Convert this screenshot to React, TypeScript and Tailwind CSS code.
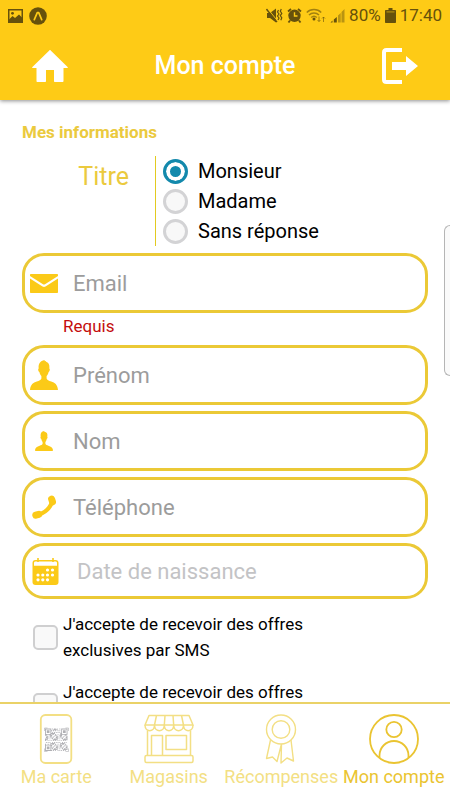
import React, { useState } from "react";

type IconProps = { className?: string };

/* Status bar icons */

const PictureIcon = () => (
  <svg width="15" height="14" viewBox="0 0 15 14" fill="none">
    <rect x="0.75" y="0.75" width="13.5" height="12.5" stroke="currentColor" strokeWidth="1.5" />
    <path d="M1 10.5 4.5 7l2.5 2 4-3.500L14 8.500V13H1z" fill="currentColor" />
    <circle cx="4.500" cy="4.300" r="1.400" fill="currentColor" />
  </svg>
);

const ExpoIcon = () => (
  <svg width="18" height="18" viewBox="0 0 18 18" fill="none">
    <circle cx="9" cy="9" r="8.800" fill="currentColor" />
    <path d="M5.300 12.600 8.300 5.600h1.400l3 7" stroke="#fecb16" strokeWidth="1.700" strokeLinejoin="round" strokeLinecap="round" />
  </svg>
);

const MuteIcon = () => (
  <svg width="17" height="15" viewBox="0 0 17 15" fill="none" stroke="currentColor">
    <path d="M1 5h3l6-4.500v14L4 10H1z" fill="currentColor" stroke="none" />
    <path d="M0.500 1 11 14" strokeWidth="1.600" />
    <path d="M1.600 0.500 12 13.500" stroke="#fecb16" strokeWidth="0.900" />
    <path d="m12.500 2-1 2 1.500 2-1.500 2 1.500 2-1 2M15.300 1l-1 2.200 1.500 2.200-1.500 2.200 1.500 2.200-1 2.500" strokeWidth="1.200" />
  </svg>
);

const AlarmIcon = () => (
  <svg width="15" height="15" viewBox="0 0 15 15" fill="none">
    <circle cx="7.500" cy="7.800" r="6.200" fill="currentColor" />
    <path d="M1 3.500 4 1M14 3.500 11 1M3 12.500l-1.500 2M12 12.500l1.500 2" stroke="currentColor" strokeWidth="1.800" />
    <path d="M7.500 4.300V8h3" stroke="#fecb16" strokeWidth="1.400" />
  </svg>
);

const WifiIcon = () => (
  <svg width="20" height="15" viewBox="0 0 20 15" fill="none" stroke="currentColor">
    <g strokeWidth="1.500" opacity="0.600">
      <path d="M0.800 4.500C4.500 0.500 11.500 0.500 15.200 4.500" />
      <path d="M3 7c2.800-2.800 7.200-2.800 10 0" />
      <path d="M5.200 9.500c1.600-1.500 4-1.500 5.600 0" />
    </g>
    <circle cx="8" cy="11" r="1.500" fill="currentColor" stroke="none" />
    <path d="M13 8.500v5M11.500 12l1.500 1.500 1.500-1.500M17.500 14V9M16 10.500 17.500 9l1.500 1.500" strokeWidth="1" opacity="0.600" />
  </svg>
);

const SignalIcon = () => (
  <svg width="15" height="14" viewBox="0 0 15 14" fill="currentColor">
    <path d="M0.500 13.500 2.500 11.500v2zM3.800 10.500 6.800 8v5.500h-3z" />
    <path d="M8 6.500 10.700 4v9.500H8zM11.500 3 14.500 0v13.500h-3z" opacity="0.450" />
  </svg>
);

const BatteryIcon = () => (
  <svg width="11" height="15" viewBox="0 0 11 15" fill="currentColor">
    <path d="M3.500 0h4v2h2.500c.6 0 1 .4 1 1v11c0 .6-.4 1-1 1H1c-.6 0-1-.4-1-1V3c0-.6.4-1 1-1h2.500z" />
    <path d="M1.500 3.300h8v1.200h-8z" fill="#fecb16" opacity="0.500" />
  </svg>
);

/* Header icons */

const HomeIcon = () => (
  <svg width="36" height="32" viewBox="0 0 36 32" fill="currentColor">
    <path d="M17.300 0.400c.4-.4 1-.4 1.400 0L35.600 17c.4.400.2 1-.4 1H31.500v13c0 .600-.4 1-1 1H23c-.6 0-1-.4-1-1V20h-8v11c0 .600-.4 1-1 1H5.500c-.6 0-1-.4-1-1V18H.8c-.6 0-.8-.6-.4-1z" />
  </svg>
);

const LogoutIcon = () => (
  <svg width="36" height="36" viewBox="0 0 36 36">
    <path d="M20 2H4.500C3 2 2 3 2 4.500v27C2 33 3 34 4.500 34H20" fill="none" stroke="currentColor" strokeWidth="4" />
    <path d="M10 14h14V8l12 10-12 10v-6H10z" fill="currentColor" />
  </svg>
);

/* Form icons */

const MailIcon = () => (
  <svg width="28" height="19" viewBox="0 0 28 19" fill="currentColor">
    <path d="M0.800 0h26.400c.5 0 .8.300.8.800V2L15 10.300c-.6.400-1.400.400-2 0L0 2V.800C0 .300.300 0 .8 0z" />
    <path d="M0 4.600 12.500 12.500c.9.600 2.100.600 3 0L28 4.600V18c0 .600-.4 1-1 1H1c-.6 0-1-.4-1-1z" />
  </svg>
);

const PersonIcon = ({ className }: IconProps) => (
  <svg className={className} viewBox="0 0 28 30" fill="currentColor">
    <path d="M14.500 0l.3 1.200 1.500-.3-.4.900c2.600.6 3.700 2.700 3.500 5.700l-.1 1c.9.200.5 3.200-.7 3.500-.3 1.800-1 3.100-2 4v2.500c.5 1.600 2.200 2.200 4.600 3.100 3.600 1.300 6.300 2.800 6.800 8.400H0c.5-5.600 3.200-7.100 6.800-8.400 2.400-.9 4.100-1.500 4.600-3.100V16c-1-.9-1.700-2.200-2-4-1.200-.3-1.600-3.300-.7-3.500l-.1-1C8.400 4 10.200.800 14.500 0z" />
  </svg>
);

const SmallPersonIcon = () => (
  <svg width="18" height="20" viewBox="0 0 18 20" fill="currentColor">
    <path d="M9.200 0l.2.800c2.300.3 3.200 1.900 3 4l-.1 1c.5.400.2 2-.6 2.300-.2 1.300-.7 2.200-1.300 2.800v1.800c.4 1.100 1.500 1.400 3 2 2.400.8 4.300 1.700 4.600 4.300 0 .600-.4 1-1 1H1c-.6 0-1-.4-1-1 .3-2.600 2.200-3.500 4.600-4.300 1.500-.6 2.600-.9 3-2v-1.800C7 10.300 6.500 9.400 6.300 8.100c-.8-.3-1.100-1.900-.6-2.300l-.1-1C5.400 2.200 6.600.500 9.200 0z" />
  </svg>
);

const PhoneIcon = () => (
  <svg width="24" height="24" viewBox="0 0 24 24" fill="none" stroke="currentColor" strokeLinecap="round">
    <path d="M20 5.500C19.500 12 12.500 19 5 19.800" strokeWidth="4" />
    <path d="M19.600 4 20.500 6.800" strokeWidth="7" />
    <path d="M3.800 20.200 6.800 19.300" strokeWidth="7" />
  </svg>
);

const CALENDAR_DOTS = [
  [15.5, 12], [20.500, 12],
  [6, 17], [10.800, 17], [15.500, 17], [20.500, 17],
  [6, 21.800], [10.800, 21.800], [15.500, 21.800],
];

const CalendarIcon = () => (
  <svg width="27" height="27" viewBox="0 0 27 27">
    <rect x="0.500" y="2" width="26" height="25" rx="3" fill="currentColor" />
    <path d="M2 7.800V5c0-1 .6-1.500 1.500-1.500h20c.9 0 1.500.5 1.500 1.500v2.800z" fill="#fff" />
    <path d="M6 0v4M21 0v4" stroke="currentColor" strokeWidth="1.600" />
    {CALENDAR_DOTS.map(([x, y]) => (
      <circle key={`${x}-${y}`} cx={x} cy={y} r="1.600" fill="#fff" />
    ))}
  </svg>
);

/* Tab bar icons */

const QR_SIZE = 25;

// null outside the three corner squares, otherwise whether the module is filled
const finder = (x: number, y: number) => {
  const fx = x > 17 ? x - 18 : x;
  const fy = y > 17 ? y - 18 : y;
  if (fx > 6 || fy > 6 || (x > 17 && y > 17)) return null;
  const ring = Math.max(Math.abs(fx - 3), Math.abs(fy - 3));
  return ring !== 2;
};

const QR_PATH = Array.from({ length: QR_SIZE * QR_SIZE }, (_, i) => {
  const x = i % QR_SIZE;
  const y = Math.floor(i / QR_SIZE);
  const on = finder(x, y) ?? (x * 7 + y * 13 + x * y * 5) % 11 < 5;
  return on ? `M${x} ${y}h1v1h-1z` : "";
}).join("");

const CardIcon = () => (
  <svg width="50" height="50" viewBox="0 0 50 50" fill="none">
    <rect x="9.800" y="1" width="30.500" height="48" rx="4.500" stroke="currentColor" strokeWidth="1.800" />
    <path d={QR_PATH} fill="#b0b0b4" transform="translate(14 14.500) scale(0.900)" />
    <path d="M13.500 17v-3h3M34.500 14h3v3M37.500 34.500v3h-3M16.500 37.500h-3v-3" stroke="#b0b0b4" strokeWidth="0.600" />
  </svg>
);

const StoreIcon = () => (
  <svg width="50" height="50" viewBox="0 0 50 50" fill="none" stroke="currentColor" strokeWidth="1.500" strokeLinejoin="round">
    <path d="M5 1.500h40l4 9.500H1zM12.500 1.500l-2 9.500M21 1.500 20.300 11M29 1.500l.7 9.500M37.500 1.500l2 9.500" />
    <path d="M1 11c0 7.500 9.500 7.500 9.500 0 0 7.500 9.800 7.500 9.800 0 0 7.500 9.400 7.500 9.400 0 0 7.500 9.800 7.500 9.800 0 0 7.500 9.500 7.500 9.500 0" />
    <path d="M3.500 16.500v25M46.500 16.500v25M7.500 41.500V21.500h11v20M22 21.500h20.500v14H22z" />
    <rect x="1" y="41.500" width="48" height="7" rx="1.500" />
  </svg>
);

const RibbonIcon = () => (
  <svg width="50" height="50" viewBox="0 0 50 50" fill="none" stroke="currentColor" strokeWidth="1.400" strokeLinejoin="round">
    <circle cx="25" cy="15.500" r="14.500" />
    <circle cx="25" cy="15.500" r="8.800" />
    <path d="M14.500 26 10.500 44.500l6-1.500 4.500 4.500L25.500 30M35 26l2.500 21-6.500-3-6 5 .5-19" />
  </svg>
);

const AccountIcon = () => (
  <svg width="50" height="50" viewBox="0 0 50 50" fill="none" stroke="currentColor" strokeWidth="1.800">
    <circle cx="25" cy="25" r="24" />
    <circle cx="25" cy="15.500" r="7.700" />
    <path d="M10.500 44V41.500c0-8 6.500-14.500 14.500-14.500s14.500 6.500 14.500 14.500V44" />
  </svg>
);

interface FieldProps {
  id: string;
  type: string;
  placeholder: string;
  icon: React.ReactNode;
}

function Field({ id, type, placeholder, icon }: FieldProps) {
  return (
    <div className="flex h-15 items-center rounded-[22px] border-3 border-[#ebc936] bg-white">
      <label htmlFor={id} aria-label={placeholder} className="flex w-[38px] shrink-0 justify-center text-[#fbca18]">
        {icon}
      </label>
      <input
        id={id}
        type={type}
        placeholder={placeholder}
        className="min-w-0 flex-1 bg-transparent px-[10px] text-[22px] text-black outline-none placeholder:text-[#9c9c9c]"
      />
    </div>
  );
}

const TITLES = ["Monsieur", "Madame", "Sans réponse"];

const OFFERS = [
  { id: "sms", text: "J'accepte de recevoir des offres exclusives par SMS" },
  { id: "mail", text: "J'accepte de recevoir des offres exclusives par email" },
];

const TABS = [
  { label: "Ma carte", icon: CardIcon },
  { label: "Magasins", icon: StoreIcon },
  { label: "Récompenses", icon: RibbonIcon },
  { label: "Mon compte", icon: AccountIcon, active: true },
];

export default function App() {
  const [title, setTitle] = useState("Monsieur");

  return (
    <div className="relative flex h-screen flex-col overflow-hidden bg-white font-['Roboto',sans-serif] text-black">
      <header className="z-10 bg-[#fecb16] shadow-[0_1px_4px_rgba(0,0,0,0.45)]">
        {/* Status bar */}
        <div className="flex h-[31px] items-center justify-between px-2 text-[#66510c]">
          <div className="flex items-center gap-[6px]">
            <PictureIcon />
            <ExpoIcon />
          </div>
          <div className="flex items-center gap-1 text-[17px]">
            <MuteIcon />
            <AlarmIcon />
            <WifiIcon />
            <SignalIcon />
            <span>80%</span>
            <BatteryIcon />
            <span>17:40</span>
          </div>
        </div>

        <div className="flex h-[69px] items-center justify-between px-8 text-white">
          <a href="#accueil" aria-label="Accueil">
            <HomeIcon />
          </a>
          <h1 className="text-[25px] font-medium">Mon compte</h1>
          <button type="button" aria-label="Se déconnecter">
            <LogoutIcon />
          </button>
        </div>
      </header>

      <main className="min-h-0 flex-1 overflow-hidden px-[22px] pt-5">
        <h2 className="text-[17px] leading-6 font-bold text-[#ebca3e]">Mes informations</h2>

        <form>
          <fieldset className="mt-3 flex" aria-label="Titre">
            <div className="w-[133px] pr-[26px] text-right text-[25px] leading-[42px] text-[#ebca3e]">Titre</div>
            <div className="border-l border-l-[#e2ca20] pl-[7px]">
              {TITLES.map((t) => (
                <label key={t} className="flex h-[30px] items-center gap-[10px] text-xl">
                  <input
                    type="radio"
                    name="titre"
                    checked={title === t}
                    onChange={() => setTitle(t)}
                    className="size-[25px] appearance-none rounded-full border-3 border-[#d3d3d5] bg-[#f8f8f8] checked:border-[#1389ac] checked:bg-[#1389ac] checked:shadow-[inset_0_0_0_4px_white]"
                  />
                  {t}
                </label>
              ))}
            </div>
          </fieldset>

          <div className="mt-[7px] flex flex-col gap-[6px]">
            <div>
              <Field id="email" type="email" placeholder="Email" icon={<MailIcon />} />
              <p className="pl-[41px] text-[17px] leading-[26px] text-[#c40d0d]">Requis</p>
            </div>
            <Field id="prenom" type="text" placeholder="Prénom" icon={<PersonIcon className="h-[30px] w-7" />} />
            <Field id="nom" type="text" placeholder="Nom" icon={<SmallPersonIcon />} />
            <Field id="telephone" type="tel" placeholder="Téléphone" icon={<PhoneIcon />} />
            <div className="flex h-14 items-center rounded-[22px] border-3 border-[#ebc936] text-[22px] text-[#c3c3c5]">
              <button type="button" className="flex flex-1 items-center">
                <span className="flex w-10 shrink-0 justify-center text-[#fbca18]">
                  <CalendarIcon />
                </span>
                <span className="pl-3">Date de naissance</span>
              </button>
            </div>
          </div>

          <div className="mt-3 flex flex-col gap-4 pl-[11px]">
            {OFFERS.map(({ id, text }) => (
              <label key={id} className="flex items-center gap-[5px] text-[17px] leading-[26px]">
                <input
                  type="checkbox"
                  name={id}
                  className="size-[25px] shrink-0 appearance-none rounded-[5px] border-2 border-[#cfcfd0] bg-[#f9f9f9] checked:bg-[#1389ac]"
                />
                <span className="max-w-[270px]">{text}</span>
              </label>
            ))}
          </div>
        </form>
      </main>

      <nav className="z-10 grid grid-cols-4 border-t-2 border-[#ead267] bg-white pt-[10px] pb-[10px]">
        {TABS.map(({ label, icon: Icon, active }) => (
          <a
            key={label}
            href={`#${label}`}
            className={`flex flex-col items-center text-lg leading-[26px] whitespace-nowrap ${active ? "text-[#eac431]" : "text-[#f3df84]"}`}
          >
            <Icon />
            <span>{label}</span>
          </a>
        ))}
      </nav>

      {/* Edge panel handle */}
      <div className="absolute top-[225px] right-0 h-[151px] w-[6px] rounded-l-md border border-r-0 border-[#b5b5b5] bg-[#fafafa]" />
    </div>
  );
}
